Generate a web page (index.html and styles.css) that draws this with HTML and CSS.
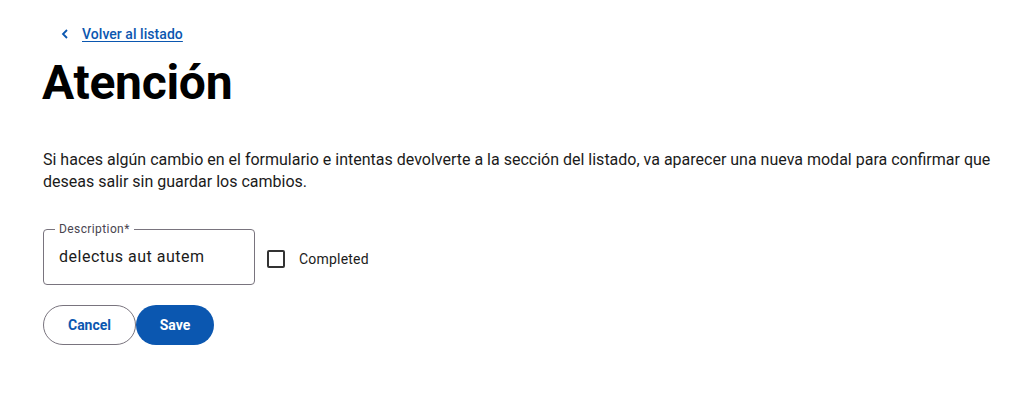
FILE: index.html
```html
<!DOCTYPE html>
<html lang="es">
<head>
<meta charset="utf-8">
<link rel="stylesheet" href="styles.css">
</head>
<body>
<main class="page">
  <a class="back" href="#">
    <svg class="chev" width="8" height="10" viewBox="0 0 8 10"><path d="M6 1 L2 5 L6 9" fill="none" stroke="#0b57b0" stroke-width="1.8"/></svg>
    <span class="back-text">Volver al listado</span>
  </a>
  <h1 class="title">Atención</h1>
  <p class="intro">Si haces algún cambio en el formulario e intentas devolverte a la sección del listado, va aparecer una nueva modal para confirmar que deseas salir sin guardar los cambios.</p>
  <form class="form">
    <div class="row">
      <fieldset class="field">
        <legend class="legend">Description*</legend>
        <input class="input" type="text" value="delectus aut autem">
      </fieldset>
      <label class="check">
        <span class="box"></span>
        <span class="check-label">Completed</span>
      </label>
    </div>
    <div class="actions">
      <button type="button" class="btn btn-outline">Cancel</button>
      <button type="button" class="btn btn-fill">Save</button>
    </div>
  </form>
</main>
</body>
</html>
```
FILE: styles.css
```css
html, body {
  margin: 0;
  padding: 0;
  background: #ffffff;
}
body {
  font-family: Roboto, "Noto Sans", sans-serif;
  color: #1b1b1b;
}
.page {
  padding: 24px 0 0 43px;
  width: 960px;
}
.back {
  display: flex;
  align-items: center;
  gap: 13px;
  margin-left: 18px;
  color: #0b57b0;
  text-decoration: none;
  height: 20px;
}
.chev { display: block; }
.back-text {
  font-size: 14px;
  font-weight: 500;
  letter-spacing: 0.05px;
  text-decoration: underline;
  text-underline-offset: 2px;
}
.title {
  margin: 11px 0 0 -1px;
  font-size: 48px;
  font-weight: 700;
  line-height: 56px;
  color: #000;
  letter-spacing: -0.3px;
}
.intro {
  margin: 38px 0 0 0;
  font-size: 16px;
  line-height: 22px;
  color: #1b1b1b;
  width: 960px;
}
.form { margin-top: 36px; }
.row {
  display: flex;
  align-items: center;
  gap: 12px;
}
.field {
  margin: -6px 0 0 0;
  padding: 0 15px;
  width: 211px;
  height: 62px;
  box-sizing: border-box;
  border: 1px solid #79747e;
  border-radius: 4px;
}
.legend {
  padding: 0 4px;
  margin-left: -4px;
  font-size: 12px;
  letter-spacing: 0.4px;
  color: #49454f;
  line-height: 12px;
}
.input {
  display: block;
  border: none;
  outline: none;
  padding: 0;
  margin-top: 12px;
  width: 180px;
  font-family: Roboto, sans-serif;
  font-size: 16px;
  letter-spacing: 0.5px;
  line-height: 20px;
  color: #1b1b1b;
  background: transparent;
}
.check {
  display: flex;
  align-items: center;
  gap: 14px;
  padding-top: 3px;
}
.box {
  width: 14px;
  height: 14px;
  border: 2px solid #333;
  border-radius: 2px;
}
.check-label {
  font-size: 14px;
  color: #1b1b1b;
  letter-spacing: 0.2px;
}
.actions {
  display: flex;
  margin-top: 20px;
}
.btn {
  height: 40px;
  border-radius: 20px;
  font-family: Roboto, sans-serif;
  font-size: 14px;
  font-weight: 700;
  padding: 0;
  cursor: pointer;
}
.btn-outline {
  width: 93px;
  background: #fff;
  border: 1px solid #79747e;
  color: #0b57b0;
}
.btn-fill {
  width: 78px;
  background: #0b57b0;
  border: none;
  color: #fff;
}
```
